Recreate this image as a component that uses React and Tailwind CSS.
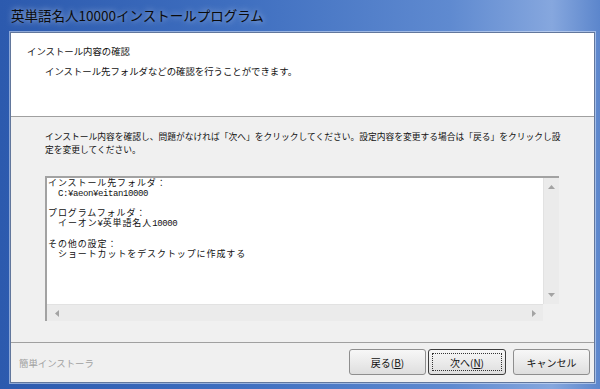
const JP = "font-['Noto_Sans_CJK_JP',sans-serif]"

function Btn({ children, primary }) {
  return (
    <button
      className={`h-[26px] rounded-[3px] border bg-[linear-gradient(#f7f7f7,#ebebeb_50%,#dedede)] text-[10px] text-[#111] flex items-center justify-center p-[3px] ${
        primary ? 'w-[78px] border-[#3d3d3d]' : 'w-[77px] border-[#8e8e8e]'
      }`}
    >
      <span
        className={`w-full h-full flex items-center justify-center ${
          primary ? 'border border-dotted border-[#333]' : ''
        }`}
      >
        {children}
      </span>
    </button>
  )
}

function Arrow({ dir }) {
  const pts = {
    up: '0,4 3.5,0 7,4',
    down: '0,0 3.5,4 7,0',
    left: '4,0 0,3.5 4,7',
    right: '0,0 4,3.5 0,7',
  }[dir]
  const v = dir === 'up' || dir === 'down'
  return (
    <svg width={v ? 7 : 4} height={v ? 4 : 7} viewBox={v ? '0 0 7 4' : '0 0 4 7'}>
      <polygon points={pts} fill="#a3a3a3" />
    </svg>
  )
}

export default function App() {
  return (
    <div
      className={`${JP} w-[600px] h-[389px] flex flex-col overflow-hidden bg-[linear-gradient(90deg,#2c5aae,#3f6fc0_40%,#5f8ad0_75%,#86a7de_92%,#5c86cc)]`}
    >
      {/* Title bar */}
      <div className="h-[32px] shrink-0 flex items-center pl-[11px] pb-[1px] text-[13.5px] text-[#0b0b0b] [text-shadow:0_0_6px_rgba(255,255,255,0.7)]">
        英単語名人10000インストールプログラム
      </div>

      {/* Client area */}
      <div className="flex-1 ml-[10px] mr-[5px] mb-[6px] border border-[#62779c] shadow-[0_0_0_1px_rgba(220,232,250,0.55)] bg-[#f0f0f0] flex flex-col">
        {/* Header */}
        <div className="h-[84px] shrink-0 bg-white border-b border-[#a0a0a0] pt-[12px] text-[9.4px] leading-[12px] text-[#111]">
          <div className="pl-[16px]">インストール内容の確認</div>
          <div className="pl-[34px] mt-[8px]">インストール先フォルダなどの確認を行うことができます。</div>
        </div>

        {/* Body */}
        <div className="flex-1 pl-[34px] pt-[13px]">
          <div className="text-[8.75px] leading-[13px] text-[#111] whitespace-nowrap">
            インストール内容を確認し、問題がなければ「次へ」をクリックしてください。設定内容を変更する場合は「戻る」をクリックし設
            <br />
            定を変更してください。
          </div>

          <div className="mt-[20px] w-[514px] h-[145px] border-t-2 border-l-2 border-[#a2a2a2] bg-[#f0f0f0] grid grid-cols-[1fr_16px] grid-rows-[1fr_17px]">
            <div className="bg-white pl-[1px] pt-[0.5px] font-['Liberation_Mono','Noto_Sans_CJK_JP',monospace] text-[9px] tracking-[0.9px] leading-[10.2px] text-[#111] whitespace-nowrap overflow-hidden">
              <div>インストール先フォルダ：</div>
              <div className="pl-[10px] tracking-[-0.4px]">C:¥aeon¥eitan10000</div>
              <div className="h-[10.2px]" />
              <div>プログラムフォルダ：</div>
              <div className="pl-[10px]">
                イーオン<span className="tracking-[-0.4px]">¥</span>英単語名人<span className="tracking-[-0.4px]">10000</span>
              </div>
              <div className="h-[10.2px]" />
              <div>その他の設定：</div>
              <div className="pl-[10px]">ショートカットをデスクトップに作成する</div>
            </div>
            {/* Vertical scrollbar */}
            <div className="bg-[#ebebeb] border-l border-[#e2e2e2] flex flex-col items-center justify-between py-[7px]">
              <Arrow dir="up" />
              <Arrow dir="down" />
            </div>
            {/* Horizontal scrollbar */}
            <div className="bg-[#ebebeb] border-t border-[#e2e2e2] flex items-center justify-between pl-[8px] pr-[7px]">
              <Arrow dir="left" />
              <Arrow dir="right" />
            </div>
            <div className="bg-[#f0f0f0]" />
          </div>
        </div>

        {/* Footer */}
        <div className="h-[40px] shrink-0 border-t border-[#a0a0a0] flex items-start pt-[6px] pr-[4px]">
          <div className="pl-[8px] pt-[7px] text-[9.4px] text-[#a0a0a0]">簡単インストーラ</div>
          <div className="ml-auto flex">
            <Btn>
              戻る(<span className="underline">B</span>)
            </Btn>
            <div className="w-[2px]" />
            <Btn primary>
              次へ(<span className="underline">N</span>)
            </Btn>
            <div className="w-[7px]" />
            <Btn>キャンセル</Btn>
          </div>
        </div>
      </div>
    </div>
  )
}
